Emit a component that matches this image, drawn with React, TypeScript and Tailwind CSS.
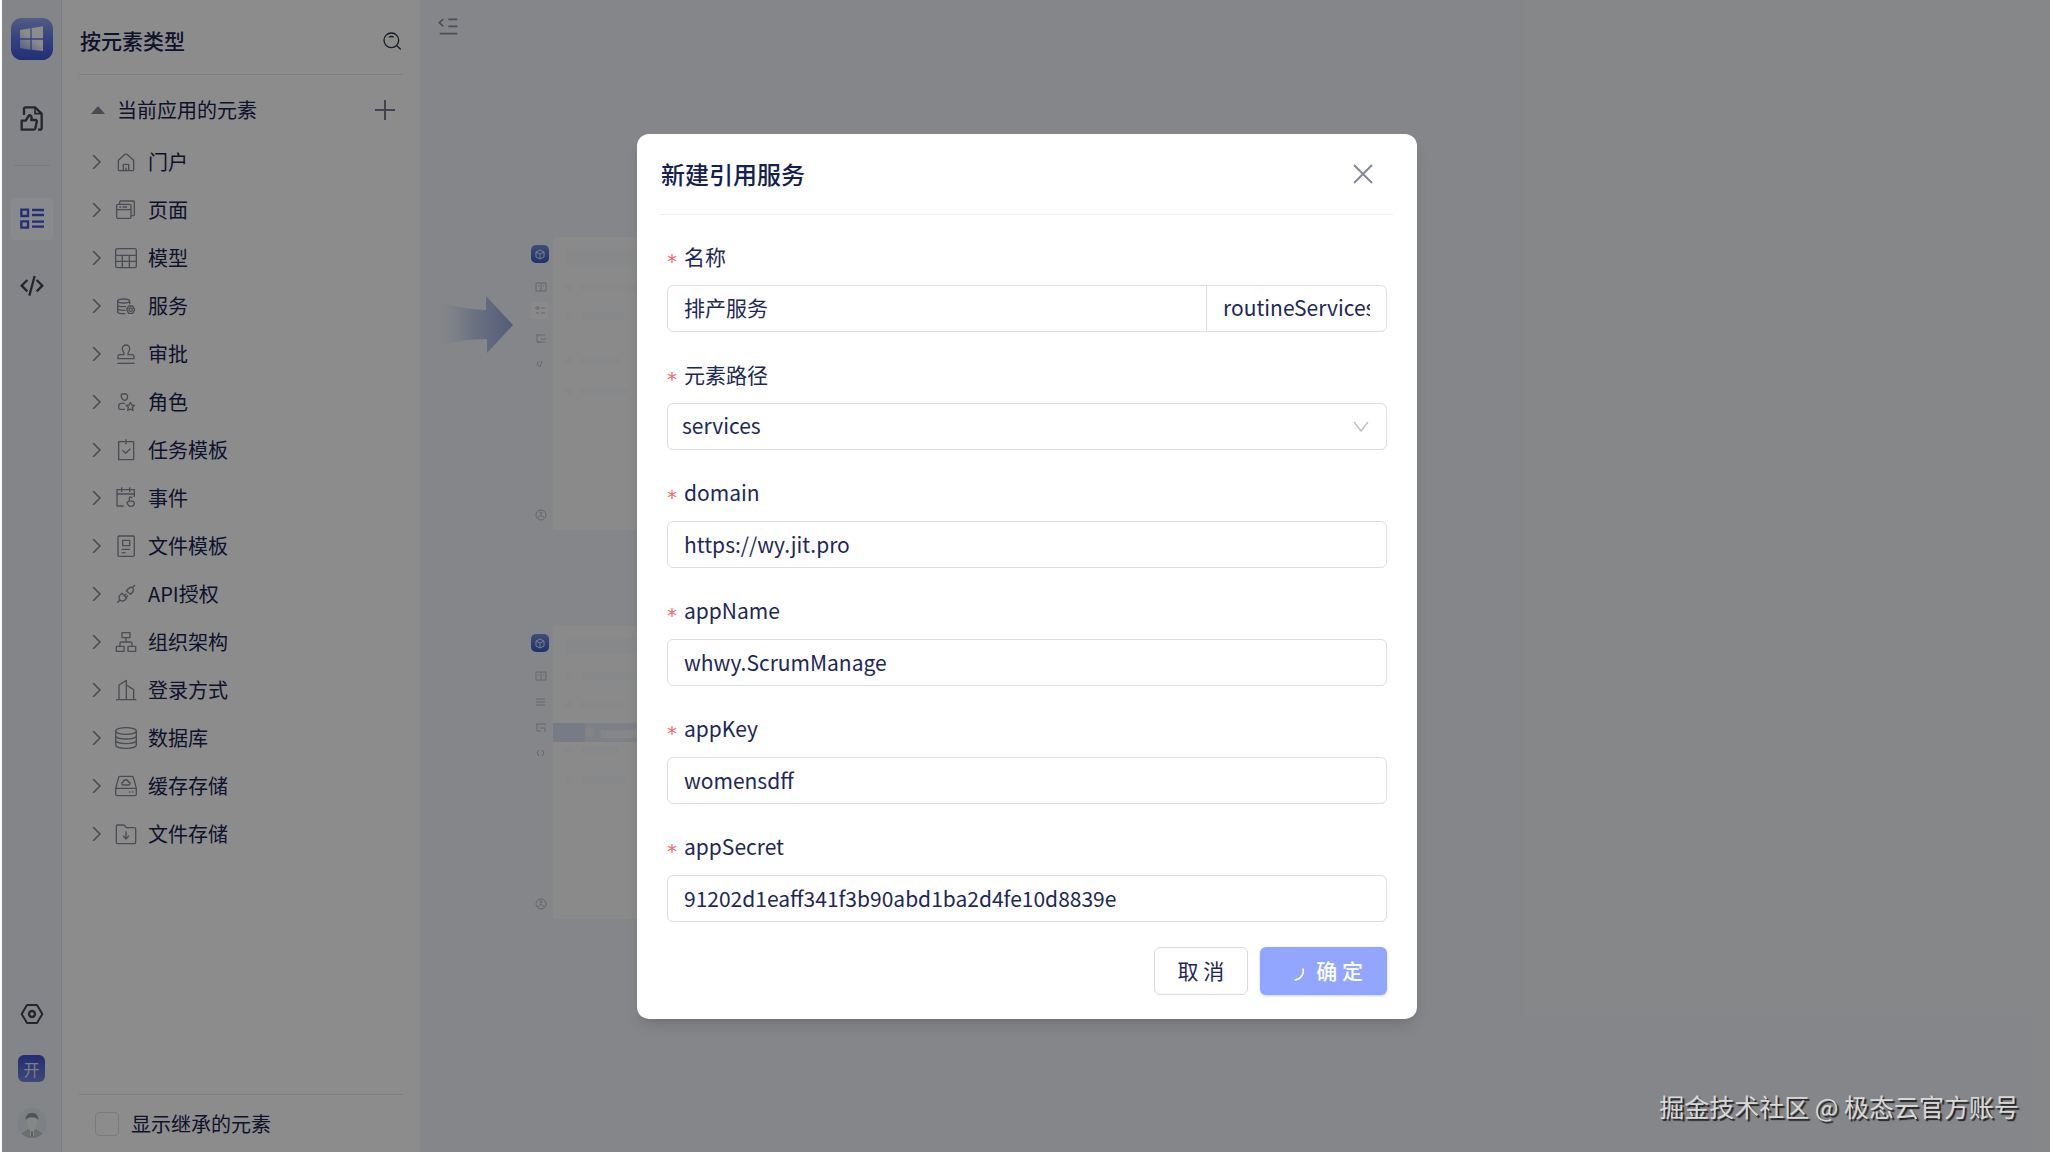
import { useState, type ReactNode } from "react";

interface ElementType {
  label: string;
  icon: ReactNode;
}

// Every tree icon is drawn on a 66 x 66 grid and shown at 22px.
const elementTypes: ElementType[] = [
  {
    label: "门户",
    icon: (
      <>
        <path d="M10 29a4 4 0 0 1 2-3L30 10a4 4 0 0 1 6 0l18 16a4 4 0 0 1 2 3v27a3 3 0 0 1-3 3H13a3 3 0 0 1-3-3z" />
        <path d="M25 59V42a2 2 0 0 1 2-2h12a2 2 0 0 1 2 2v17M33 50v9" />
      </>
    ),
  },
  {
    label: "页面",
    icon: (
      <>
        <path d="M14 15V9a3 3 0 0 1 3-3h38a3 3 0 0 1 3 3v38a3 3 0 0 1-3 3h-6" />
        <rect x="5" y="16" width="43" height="42" rx="4" />
        <path d="M5 32h43M13 24h5m4 0h14" />
      </>
    ),
  },
  {
    label: "模型",
    icon: (
      <>
        <rect x="2" y="5" width="62" height="57" rx="5" />
        <path d="M2 25h62M2 43h62M22 25v37M43 25v37" />
      </>
    ),
  },
  {
    label: "服务",
    icon: (
      <>
        <ellipse cx="26" cy="18" rx="18" ry="6" />
        <path d="M8 18v32c0 3 8 6 18 6h5M44 18v10M8 29c0 4 8 6 18 6h8M8 40c0 4 8 6 18 6h5" />
        <path d="M41 33h12l6 11-6 11H41l-6-11z" />
        <circle cx="47" cy="44" r="5" />
      </>
    ),
  },
  {
    label: "审批",
    icon: (
      <>
        <path d="M27 35c2-6-5-10-5-18a11 11 0 0 1 22 0c0 8-7 12-5 18h12c4 0 6 3 6 6v6H9v-6c0-3 2-6 6-6z" />
        <path d="M7 61h52" />
      </>
    ),
  },
  {
    label: "角色",
    icon: (
      <>
        <path d="M20 9h14c6 4 5 18-5 19-10-1-12-13-9-19z" />
        <path d="M30 37H19c-5 0-8 4-8 9v4c0 3 2 5 5 5h14" />
        <path d="m46 34 4 8 9 1-7 6 2 9-8-4-8 4 2-9-7-6 9-1z" />
      </>
    ),
  },
  {
    label: "任务模板",
    icon: (
      <>
        <path d="M11 8h45v54H11zM33 1v15" />
        <path d="m22 34 10 9 14-14" />
      </>
    ),
  },
  {
    label: "事件",
    icon: (
      <>
        <path d="M26 57H6V8h52v22M6 21h52M20 1v14M44 1v14" />
        <path d="M43 44V34a4 4 0 0 1 8 0M43 42l-7 4c2 8 5 12 12 12s10-5 10-11c-2-5-8-5-12-5" />
      </>
    ),
  },
  {
    label: "文件模板",
    icon: (
      <>
        <rect x="9" y="3" width="49" height="61" rx="4" />
        <path d="M23 16h21v16H23zM20 43h25M20 53h12" />
      </>
    ),
  },
  {
    label: "API授权",
    icon: (
      <>
        <path d="m7 59 8-8M52 14l8-8M15 51c-6-7-3-13 6-20l14 14c-7 9-13 12-20 6zM34 24c6-8 12-15 19-10 6 7 2 13-6 20z" />
        <path d="m28 38 6-6m-1 12 6-7" />
      </>
    ),
  },
  {
    label: "组织架构",
    icon: (
      <>
        <path d="M21 5h24v15H21zM4 46h23v15H4zM39 46h23v15H39z" />
        <path d="M33 20v13M15 46V36a3 3 0 0 1 3-3h30a3 3 0 0 1 3 3v10" />
      </>
    ),
  },
  {
    label: "登录方式",
    icon: <path d="M3 62h61M12 62V18L34 4v58M34 18l22 14v30" />,
  },
  {
    label: "数据库",
    icon: (
      <>
        <ellipse cx="33" cy="12" rx="31" ry="10" />
        <path d="M2 12v42c0 6 14 10 31 10s31-4 31-10V12M2 26c0 6 14 10 31 10s31-4 31-10M2 40c0 6 14 10 31 10s31-4 31-10" />
      </>
    ),
  },
  {
    label: "缓存存储",
    icon: (
      <>
        <path d="M2 40 11 7a4 4 0 0 1 4-3h36a4 4 0 0 1 4 3l9 33v18a4 4 0 0 1-4 4H6a4 4 0 0 1-4-4zM2 40h62" />
        <path d="M24 30c-6-1-5-9 1-9 1-9 14-9 15 0 7 0 7 8 1 9zM42 51h4m5 0h4" />
      </>
    ),
  },
  {
    label: "文件存储",
    icon: (
      <>
        <path d="M4 10a4 4 0 0 1 4-4h19l7 8h24a4 4 0 0 1 4 4v40a4 4 0 0 1-4 4H8a4 4 0 0 1-4-4z" />
        <path d="M33 25v22m-9-9 9 10 9-10" />
      </>
    ),
  },
];

const textFields = [
  { id: "domain", value: "https://wy.jit.pro" },
  { id: "appName", value: "whwy.ScrumManage" },
  { id: "appKey", value: "womensdff" },
  { id: "appSecret", value: "91202d1eaff341f3b90abd1ba2d4fe10d8839e" },
];

function Rail() {
  return (
    <nav className="flex w-[60px] shrink-0 flex-col items-center border-r border-[#d9dce4] bg-[#f0f2f8] pt-[18px] pb-[14px]">
      <a href="#home" aria-label="首页">
        <svg className="size-[42px]" viewBox="0 0 126 126">
          <defs>
            <linearGradient id="logo" x1="0" y1="0" x2="0" y2="1">
              <stop offset="0" stopColor="#98a9f2" />
              <stop offset="0.5" stopColor="#6078e6" />
              <stop offset="1" stopColor="#3f55d6" />
            </linearGradient>
            <linearGradient id="pane" x1="0" y1="1" x2="0.7" y2="0">
              <stop offset="0" stopColor="#8fa5f0" />
              <stop offset="0.6" stopColor="#fff" />
            </linearGradient>
          </defs>
          <rect width="126" height="126" rx="32" fill="url(#logo)" />
          <path
            d="M27 36l31-5v30H27zM62 30l34-5v36H62zM27 65h31v30l-31-5zM62 65h34v34l-34-4z"
            fill="url(#pane)"
          />
        </svg>
      </a>
      <a href="#recommend" aria-label="推荐" className="mt-[45px]">
        <svg
          className="size-[26px]"
          viewBox="0 0 78 78"
          fill="none"
          stroke="#414557"
          strokeWidth="7"
          strokeLinejoin="round"
        >
          <path d="M15 30V12a5 5 0 0 1 5-5h28l20 19v43a5 5 0 0 1-5 5h-6" />
          <path d="M48 7v19h20" strokeWidth="5" />
          <path d="M8 47h12l10-16c7-1 9 4 7 14h12c4 0 5 3 4 6l-4 19c-1 3-2 4-5 4H8z" />
        </svg>
      </a>
      <hr className="mt-[34px] w-9 border-[#dfe2ea]" />
      <a
        href="#elements"
        aria-label="元素"
        className="mt-8 flex size-[42px] items-center justify-center rounded bg-[#fafbff]"
      >
        <svg
          className="size-6"
          viewBox="0 0 72 72"
          fill="none"
          stroke="#4654d8"
          strokeWidth="7"
        >
          <path d="M4 8h20v19H4zM4 43h20v19H4zM36 9h36M36 24h36M36 44h36M36 59h36" />
        </svg>
      </a>
      <a href="#code" aria-label="代码" className="mt-[34px]">
        <svg
          className="size-6"
          viewBox="0 0 72 72"
          fill="none"
          stroke="#414557"
          strokeWidth="7"
        >
          <path d="M22 18 5 35l17 17M50 18l17 17-17 17M44 6 28 65" />
        </svg>
      </a>
      <a href="#settings" aria-label="设置" className="mt-auto">
        <svg
          className="size-6"
          viewBox="0 0 72 72"
          fill="none"
          stroke="#414557"
          strokeWidth="6"
          strokeLinejoin="round"
        >
          <path d="M21 9h30l16 27-16 27H21L5 36z" />
          <circle cx="36" cy="36" r="9" strokeWidth="7" />
        </svg>
      </a>
      <a
        href="#dev"
        className="mt-[29px] flex size-[27px] items-center justify-center rounded-md bg-linear-to-b from-[#4350cc] to-[#7584dc] text-base text-[#dfe3fa]"
      >
        开
      </a>
      <a href="#me" aria-label="我的" className="mt-[26px]">
        <svg className="size-[30px]" viewBox="0 0 90 90">
          <circle cx="45" cy="45" r="45" fill="#e6ebee" />
          <path d="M14 78c10-12 20-14 31-14s21 2 31 14A45 45 0 0 1 14 78z" fill="#c3c9cb" />
          <path d="M29 36c0-8 32-8 32 0 0 14-6 24-10 28v20H39V64c-4-4-10-14-10-28z" fill="#f4f5f5" />
          <path d="M26 38c-4-32 42-32 38 0-2-8-10-10-19-10s-17 2-19 10z" fill="#929a9f" />
          <path d="M42 70h6v15h-6z" fill="#a9aeb2" />
        </svg>
      </a>
    </nav>
  );
}

function Sidebar() {
  return (
    <aside className="flex w-[358px] shrink-0 flex-col bg-white px-[17px] text-xl text-[#1a2450]">
      <header className="flex h-[75px] items-center justify-between border-b border-[#e4e6e9] pt-2 pr-0.5 pl-px">
        <h1 className="text-[21px] font-medium">按元素类型</h1>
        <button type="button" aria-label="搜索">
          <svg
            className="size-[18px]"
            viewBox="0 0 54 54"
            fill="none"
            stroke="#2b3048"
            strokeWidth="4"
            strokeLinecap="round"
          >
            <circle cx="25" cy="25" r="22" />
            <path d="m42 42 10 9M19 15c4-2 8-2 12 0" />
          </svg>
        </button>
      </header>

      <div className="mt-2.5 flex h-[50px] items-center pr-2 pl-3">
        <svg className="h-2 w-[14px]" viewBox="0 0 14 8">
          <path d="M0 8 6 1q1-1 2 0l6 7z" fill="#858a9c" />
        </svg>
        <h2 className="ml-3 flex-1">当前应用的元素</h2>
        <button type="button" aria-label="新增">
          <svg className="size-5" viewBox="0 0 20 20" stroke="#777c8e" strokeWidth="2">
            <path d="M0 10h20M10 0v20" />
          </svg>
        </button>
      </div>

      <ul className="mt-[3px]">
        {elementTypes.map(({ label, icon }) => (
          <li key={label}>
            <button type="button" className="flex h-12 w-full items-center pl-[13px]">
              <svg
                className="mr-[13px] h-[14px] w-[10px]"
                viewBox="0 0 10 14"
                fill="none"
                stroke="#858995"
                strokeWidth="1.5"
              >
                <path d="m1 0 7 7-7 7" />
              </svg>
              <svg
                className="mr-[11px] size-[22px]"
                viewBox="0 0 66 66"
                fill="none"
                stroke="#878c98"
                strokeWidth="4"
                strokeLinejoin="round"
              >
                {icon}
              </svg>
              {label}
            </button>
          </li>
        ))}
      </ul>

      <footer className="mt-auto border-t border-[#e4e6e9]">
        <label className="flex h-[57px] items-center gap-3 pl-4">
          <input
            type="checkbox"
            className="size-6 appearance-none rounded border border-[#dcdee2] bg-white"
          />
          显示继承的元素
        </label>
      </footer>
    </aside>
  );
}

// Faded miniature of the editor shown behind the guide.
function EditorPreview({ highlighted = false }: { highlighted?: boolean }) {
  return (
    <svg className="h-[294px] w-[400px]" viewBox="0 0 400 294" fill="none">
      <defs>
        <linearGradient id="cube" x1="0" y1="0" x2="0" y2="1">
          <stop offset="0" stopColor="#7090dd" />
          <stop offset="1" stopColor="#3a58c4" />
        </linearGradient>
      </defs>
      <rect x="22" width="378" height="293" rx="3" fill="#fcfcfc" />
      <rect y="8" width="18" height="18" rx="5" fill="url(#cube)" />
      <path
        d="m9 13 4 2v5l-4 2-4-2v-5zM5 15l4 2 4-2M9 17v5"
        stroke="#dfe7fb"
        strokeLinejoin="round"
      />
      {!highlighted && <rect y="65" width="17" height="17" rx="1" fill="#fbfcfd" />}
      <g stroke="#b6b9c0">
        <path d="M5 46h10v8H5zM10 46v9M7 49h1m4 0h1" />
        {highlighted ? (
          <path d="M5 73h9M5 76h9M5 79h9M5 98h10M6 98v7h4M9 102h5v4M8 124l-2 3 2 3m3-6 2 3-2 3" />
        ) : (
          <path d="M5 70h3v2H5zM10 71h4M5 76h3M10 76h4M5 98h9M6 98v7h4M10 102h5M6 105h8M8 124l-2 3 2 3m3-6-2 6" />
        )}
        <circle cx="10" cy="278" r="5" />
        <path d="M7 281c1-3 5-3 6 0" />
        <circle cx="10" cy="276" r="1" />
      </g>
      <g fill="#f6f7f9">
        <rect x="34" y="12" width="80" height="16" rx="2" />
        <rect x="34" y="46" width="8" height="8" rx="4" />
        <rect x="50" y="46" width="60" height="8" rx="3" />
        <rect x="34" y="75" width="8" height="8" rx="4" />
        <rect x="50" y="75" width="44" height="8" rx="3" />
        <rect x="34" y="120" width="8" height="8" rx="4" />
        <rect x="50" y="120" width="38" height="8" rx="3" />
        <rect x="34" y="150" width="8" height="8" rx="4" />
        <rect x="50" y="150" width="46" height="8" rx="3" />
      </g>
      {highlighted && (
        <>
          <rect x="22" y="97" width="378" height="19" fill="#e4e9f5" />
          <rect x="22" y="97" width="32" height="19" fill="#d9e1f3" />
          <circle cx="59" cy="106" r="5" fill="#eef1f8" />
          <rect x="70" y="104" width="300" height="8" fill="#f3f5fa" />
        </>
      )}
    </svg>
  );
}

function Canvas() {
  return (
    <main className="min-w-0 flex-1 bg-[#f3f5f9] pt-[18px] pl-[14px]">
      <button type="button" aria-label="收起" className="ml-1 block">
        <svg
          className="h-[17px] w-5"
          viewBox="0 0 60 51"
          fill="none"
          stroke="#8b8f9c"
          strokeWidth="5"
        >
          <path d="M16 3 4 14l12 11M31 4h27M31 25h27M5 47h53" />
        </svg>
      </button>
      <div className="mt-[202px] flex">
        <svg className="mt-[59px] mr-[17px] h-[58px] w-20" viewBox="0 0 80 58">
          <defs>
            <linearGradient id="arrow" x1="0" y1="0" x2="1" y2="0">
              <stop offset="0" stopColor="#e6ecf8" stopOpacity="0" />
              <stop offset="0.5" stopColor="#c3cfec" />
              <stop offset="1" stopColor="#97aade" />
            </linearGradient>
          </defs>
          <path d="M0 6q30 7 52 8V0l27 29-26 28V43Q25 43 4 51z" fill="url(#arrow)" />
        </svg>
        <div className="flex flex-col gap-[95px]">
          <EditorPreview />
          <EditorPreview highlighted />
        </div>
      </div>
    </main>
  );
}

function FieldLabel({ htmlFor, children }: { htmlFor: string; children: ReactNode }) {
  return (
    <label htmlFor={htmlFor} className="flex h-8 items-center gap-[7px] text-[21px] text-[#1d2858]">
      <span className="pt-2 font-['DejaVu_Sans',sans-serif] text-xl text-[#f0696b]">*</span>
      {children}
    </label>
  );
}

function ServiceDialog() {
  const [name, setName] = useState("排产服务");
  const [code, setCode] = useState("routineServices");

  return (
    <div
      role="dialog"
      aria-modal="true"
      aria-labelledby="dialog-title"
      className="w-[780px] rounded-xl bg-white px-[22px] pb-6 shadow-lg"
    >
      <header className="mr-0.5 flex h-[81px] items-center justify-between border-b border-[#eeeff1] pr-5 pl-0.5">
        <h2 id="dialog-title" className="text-2xl font-medium text-[#14204f]">
          新建引用服务
        </h2>
        <button type="button" aria-label="关闭">
          <svg className="size-5" viewBox="0 0 20 20" stroke="#838998" strokeWidth="2">
            <path d="m1 1 18 18M19 1 1 19" />
          </svg>
        </button>
      </header>

      <form className="px-2 pt-[26px]">
        <div className="flex flex-col gap-[27px]">
          <div>
            <FieldLabel htmlFor="name">名称</FieldLabel>
            <div className="mt-3 flex h-[47px] overflow-hidden rounded-md border border-[#dcdee2] text-[21px] text-[#1d2858]">
              <input
                id="name"
                value={name}
                onChange={(e) => setName(e.target.value)}
                className="min-w-0 flex-1 px-4 outline-none"
              />
              <input
                aria-label="标识"
                value={code}
                onChange={(e) => setCode(e.target.value)}
                className="w-[180px] border-l border-[#dcdee2] px-4 outline-none"
              />
            </div>
          </div>
          <div>
            <FieldLabel htmlFor="path">元素路径</FieldLabel>
            <div className="relative mt-3">
              <select
                id="path"
                className="block h-[47px] w-full appearance-none rounded-md border border-[#dcdee2] bg-white px-[14px] text-[21px] text-[#1d2858] outline-none"
              >
                <option>services</option>
              </select>
              <svg
                className="pointer-events-none absolute top-[18px] right-[18px] h-3 w-4"
                viewBox="0 0 16 12"
                fill="none"
                stroke="#bfc2c9"
                strokeWidth="1.5"
              >
                <path d="m1 1 7 9 7-9" />
              </svg>
            </div>
          </div>
          {textFields.map(({ id, value }) => (
            <div key={id}>
              <FieldLabel htmlFor={id}>{id}</FieldLabel>
              <input
                id={id}
                defaultValue={value}
                className="mt-3 block h-[47px] w-full rounded-md border border-[#dcdee2] bg-white px-4 text-[21px] text-[#1d2858] outline-none"
              />
            </div>
          ))}
        </div>
        <div className="mt-[25px] flex justify-end gap-3 text-[21px]">
          <button
            type="button"
            className="h-12 rounded-md border border-[#d8dbe4] px-[23px] text-[#1d2858]"
          >
            取 消
          </button>
          <button
            type="button"
            className="flex h-12 items-center gap-3 rounded-md bg-[#92a6ff] px-6 font-medium text-white shadow-sm shadow-[#92a6ff]/40"
          >
            <svg className="size-5" viewBox="0 0 20 20" fill="none" stroke="#fff" strokeWidth="1.6">
              <path d="M19 8a9 9 0 0 1-8 11" strokeLinecap="round" />
            </svg>
            确 定
          </button>
        </div>
      </form>
    </div>
  );
}

export default function App() {
  return (
    <div className="relative flex min-h-screen bg-white pl-0.5 font-['Noto_Sans_CJK_SC',sans-serif]">
      <Rail />
      <Sidebar />
      <Canvas />
      <div className="absolute inset-y-0 right-0 left-0.5 flex items-center justify-center bg-black/45 pl-0.5">
        <ServiceDialog />
      </div>
      <p className="absolute right-[31px] bottom-[27px] text-[25px] text-[#d8d8d8] [text-shadow:2px_2px_1px_#222]">
        掘金技术社区 @ 极态云官方账号
      </p>
    </div>
  );
}
